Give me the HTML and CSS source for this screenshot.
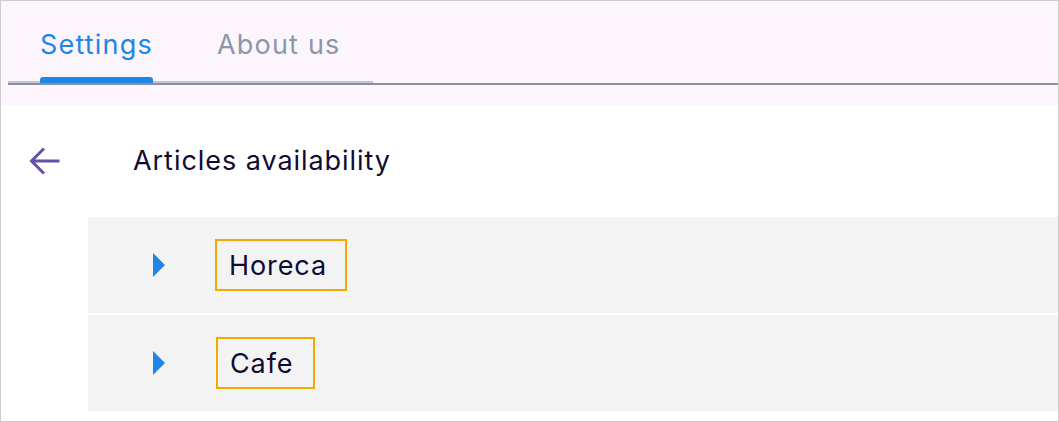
FILE: index.html
```html
<!DOCTYPE html>
<html>
<head>
<meta charset="utf-8">
<link rel="stylesheet" href="styles.css">
</head>
<body>
<div class="frame">
  <header class="header">
    <nav class="tabs">
      <div class="tab active"><span class="label">Settings</span></div>
      <div class="tab"><span class="label">About us</span></div>
    </nav>
    <div class="divider"></div>
  </header>
  <main class="content">
    <div class="titlebar">
      <svg class="back" viewBox="0 0 32 32" width="32" height="32" aria-hidden="true">
        <path d="M31.5 16H3.5M16 3.5L3.5 16L16 28.5" fill="none" stroke="#6650a6" stroke-width="3" stroke-linecap="butt" stroke-linejoin="miter"/>
      </svg>
      <h1 class="title">Articles availability</h1>
    </div>
    <div class="list">
      <div class="row">
        <span class="caret"></span>
        <span class="chip">Horeca</span>
      </div>
      <div class="row">
        <span class="caret"></span>
        <span class="chip chip-short">Cafe</span>
      </div>
    </div>
  </main>
</div>
</body>
</html>
```
FILE: styles.css
```css
* { box-sizing: border-box; }
html, body { margin: 0; padding: 0; background: #ffffff; }
body { font-family: "Inter", "Noto Sans", sans-serif; }

.frame {
  width: 1059px;
  height: 422px;
  border: 1px solid #cccccc;
  overflow: hidden;
  background: #ffffff;
}

.header {
  background: #fdf5fd;
  height: 104px;
  padding-left: 7px;
}

.tabs {
  display: flex;
  width: 365px;
  height: 82px;
  border-bottom: 2px solid #c9c3cc;
}

.tab {
  padding: 0 32px;
  display: flex;
  align-items: flex-start;
  position: relative;
}

.label {
  display: block;
  font-size: 27px;
  line-height: 32px;
  margin-top: 28px;
  color: #8a96a9;
  letter-spacing: 1.2px;
}

.tab.active .label { color: #1e86e4; }

.tab.active::after {
  content: "";
  position: absolute;
  left: 32px;
  right: 32px;
  bottom: -2px;
  height: 6px;
  background: #1e86e4;
  border-radius: 3px 3px 0 0;
}

.divider {
  height: 2px;
  background: #8790a8;
}

.content {
  padding-top: 40px;
}

.titlebar {
  display: flex;
  align-items: center;
  height: 32px;
  margin-bottom: 40px;
}

.back {
  margin-left: 27px;
  flex: none;
}

.title {
  margin: 0 0 0 73px;
  font-weight: 400;
  font-size: 27px;
  line-height: 32px;
  color: #0e0c34;
  letter-spacing: 0.95px;
}

.list {
  margin-left: 87px;
  display: flex;
  flex-direction: column;
  gap: 2px;
}

.row {
  height: 96px;
  background: #f3f3f3;
  display: flex;
  align-items: center;
  padding-left: 65px;
}

.caret {
  width: 0;
  height: 0;
  border-top: 12.5px solid transparent;
  border-bottom: 12.5px solid transparent;
  border-left: 12px solid #1e86e4;
  margin-right: 50px;
}

.chip {
  border: 2px solid #f5a800;
  height: 52px;
  display: flex;
  align-items: center;
  padding: 0 18px 0 12px;
  font-size: 27px;
  color: #0e0c34;
  letter-spacing: 0.9px;
}

.chip-short {
  margin-left: 1px;
  padding-right: 20px;
}
```
